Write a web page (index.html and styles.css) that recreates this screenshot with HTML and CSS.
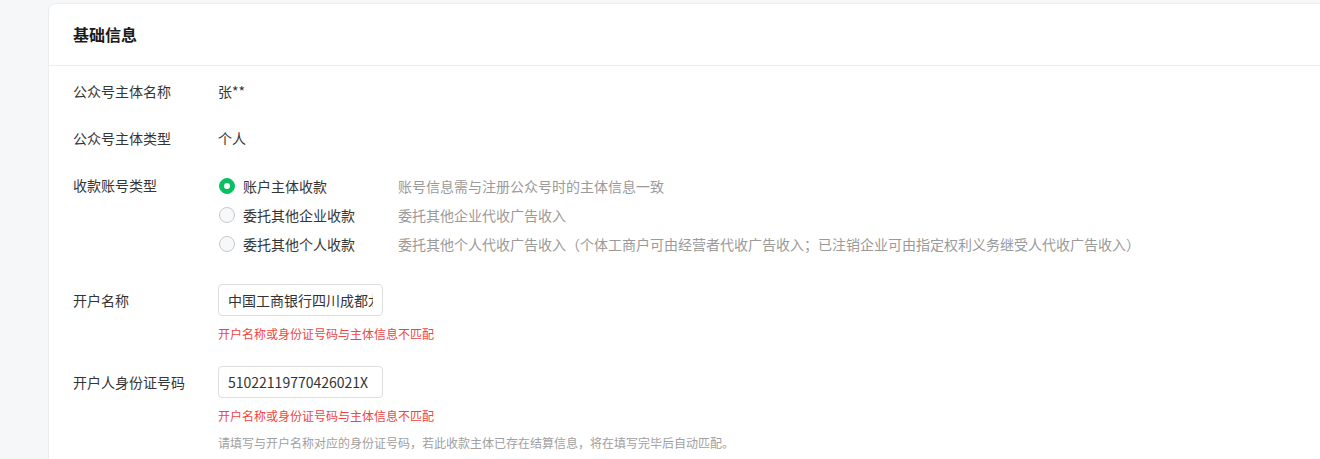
FILE: index.html
```html
<!DOCTYPE html>
<html lang="zh-CN">

<head>
    <meta charset="UTF-8">
    <meta name="viewport" content="width=device-width, initial-scale=1.0">
    <title>基础信息</title>
    <link rel="stylesheet" href="styles.css">
</head>

<body>
    <div class="page">
        <div class="card">
            <div class="card-header">基础信息</div>
            <div class="card-body">
                <div class="form-row">
                    <div class="form-label">公众号主体名称</div>
                    <div class="form-value">张**</div>
                </div>
                <div class="form-row">
                    <div class="form-label">公众号主体类型</div>
                    <div class="form-value">个人</div>
                </div>
                <div class="form-row radio-row">
                    <div class="form-label">收款账号类型</div>
                    <div class="radio-group">
                        <label class="radio-item">
                            <span class="radio checked"></span>
                            <span class="radio-text">账户主体收款</span>
                            <span class="radio-desc">账号信息需与注册公众号时的主体信息一致</span>
                        </label>
                        <label class="radio-item">
                            <span class="radio"></span>
                            <span class="radio-text">委托其他企业收款</span>
                            <span class="radio-desc">委托其他企业代收广告收入</span>
                        </label>
                        <label class="radio-item">
                            <span class="radio"></span>
                            <span class="radio-text">委托其他个人收款</span>
                            <span class="radio-desc">委托其他个人代收广告收入（个体工商户可由经营者代收广告收入；已注销企业可由指定权利义务继受人代收广告收入）</span>
                        </label>
                    </div>
                </div>
                <div class="form-row input-row">
                    <div class="form-label">开户名称</div>
                    <div class="form-field">
                        <input type="text" class="text-input" value="中国工商银行四川成都龙泉驿支行">
                        <div class="field-error">开户名称或身份证号码与主体信息不匹配</div>
                    </div>
                </div>
                <div class="form-row input-row">
                    <div class="form-label">开户人身份证号码</div>
                    <div class="form-field">
                        <input type="text" class="text-input" value="51022119770426021X">
                        <div class="field-error">开户名称或身份证号码与主体信息不匹配</div>
                        <div class="field-tip">请填写与开户名称对应的身份证号码，若此收款主体已存在结算信息，将在填写完毕后自动匹配。</div>
                    </div>
                </div>
            </div>
        </div>
    </div>
</body>

</html>
```

FILE: styles.css
```css
body {
    margin: 0;
    background-color: #f6f7f9;
    font-family: "Noto Sans CJK SC", "Noto Sans", sans-serif;
    color: #333;
    overflow: hidden;
}

.page {
    padding: 3px 0 0 48px;
}

.card {
    background-color: #fff;
    border: 1px solid #ebedf0;
    border-radius: 8px 0 0 0;
    margin-right: -20px;
    min-height: 470px;
}

.card-header {
    height: 61px;
    line-height: 60px;
    padding-left: 24px;
    font-size: 16px;
    font-weight: bold;
    color: #1a1a1a;
    border-bottom: 1px solid #ebedf0;
}

.card-body {
    padding: 14px 24px;
}

.form-row {
    display: flex;
    font-size: 14px;
    line-height: 22px;
    margin-bottom: 25px;
}

.form-label {
    width: 145px;
    flex-shrink: 0;
    color: #353535;
}

.form-value {
    color: #353535;
}

.radio-row {
    margin-bottom: 29px;
}

.radio-group {
    display: flex;
    flex-direction: column;
    gap: 7px;
}

.radio-item {
    display: flex;
    align-items: center;
    height: 22px;
}

.radio-item:first-child {
    margin-top: 1px;
}

.radio {
    width: 16px;
    height: 16px;
    box-sizing: border-box;
    border-radius: 50%;
    border: 1px solid #c9c9c9;
    background-color: #f7f8fa;
    margin-left: 1px;
    margin-right: 8px;
    position: relative;
}

.radio.checked {
    background-color: #07c160;
    border-color: #07c160;
}

.radio.checked::after {
    content: "";
    position: absolute;
    left: 4px;
    top: 4px;
    width: 6px;
    height: 6px;
    border-radius: 50%;
    background-color: #fff;
}

.radio-text {
    width: 155px;
    color: #353535;
}

.radio-desc {
    color: #9a9a9a;
}

.input-row {
    margin-bottom: 22px;
}

.input-row .form-label {
    line-height: 32px;
}

.form-field {
    display: flex;
    flex-direction: column;
    align-items: flex-start;
}

.text-input {
    width: 165px;
    height: 32px;
    box-sizing: border-box;
    border: 1px solid #dcdee2;
    border-radius: 4px;
    padding: 0 9px;
    font-family: inherit;
    font-size: 14px;
    color: #333;
    outline: none;
}

.field-error {
    margin-top: 8px;
    font-size: 12px;
    line-height: 20px;
    color: #f04545;
}

.field-tip {
    margin-top: 7px;
    font-size: 12px;
    line-height: 20px;
    color: #a0a0a0;
}
```
